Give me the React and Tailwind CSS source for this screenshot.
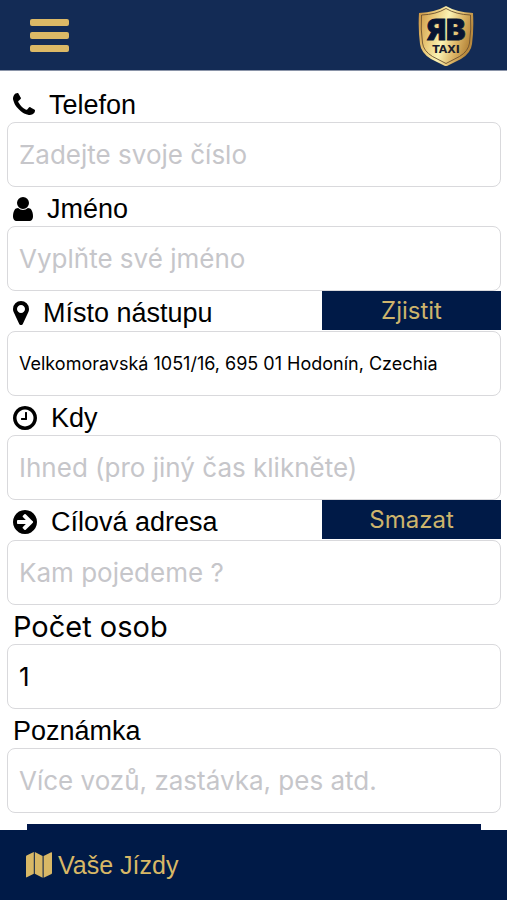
import React, { useState } from 'react';

const icons = {
    phone: {
        box: '192 128 1408 1536',
        size: 'w-[22px] h-6',
        d: 'M1600 1240q0 27-10 70.5t-21 68.5q-21 50-122 106-94 51-186 51-27 0-53-3.5t-57.5-12.5-47-14.5-55.5-20.5-49-18q-98-35-175-83-127-79-264-216t-216-264q-48-77-83-175-3-9-18-49t-20.5-55.5-14.5-47-12.5-57.5-3.5-53q0-92 51-186 56-101 106-122 25-11 68.5-21t70.5-10q14 0 21 3 18 6 53 76 11 19 30 54t35 63.5 31 53.5q3 4 17.5 25t21.5 35.5 7 28.5q0 20-28.5 50t-62 55-62 53-28.5 46q0 9 5 22.5t8.5 20.5 14 24 11.5 19q76 137 174 235t235 174q2 1 19 11.5t24 14 20.5 8.5 22.5 5q18 0 46-28.5t53-62 55-62 50-28.5q14 0 28.5 7t35.5 21.5 25 17.5q25 15 53.5 31t63.5 35 54 30q70 35 76 53 3 7 3 21z',
    },
    user: {
        box: '256 128 1280 1536',
        size: 'w-5 h-6',
        d: 'M1536 1399q0 109-62.5 187t-150.5 78h-854q-88 0-150.5-78t-62.5-187q0-85 8.5-160.5t31.5-152 58.5-131 94-89 134.5-34.5q131 128 313 128t313-128q76 0 134.5 34.5t94 89 58.5 131 31.5 152 8.5 160.5zm-256-887q0 159-112.5 271.5t-271.5 112.5-271.5-112.5-112.5-271.5 112.5-271.5 271.5-112.5 271.5 112.5 112.5 271.5z',
    },
    marker: {
        box: '384 128 1024 1536',
        size: 'w-4 h-6',
        d: 'M1152 640q0-106-75-181t-181-75-181 75-75 181 75 181 181 75 181-75 75-181zm256 0q0 109-33 179l-364 774q-16 33-47.5 52t-67.5 19-67.5-19-46.5-52l-365-774q-33-70-33-179 0-212 150-362t362-150 362 150 150 362z',
    },
    clock: {
        box: '128 128 1536 1536',
        size: 'w-6 h-6',
        d: 'M1024 544v448q0 14-9 23t-23 9h-320q-14 0-23-9t-9-23v-64q0-14 9-23t23-9h224v-352q0-14 9-23t23-9h64q14 0 23 9t9 23zm416 352q0-148-73-273t-198-198-273-73-273 73-198 198-73 273 73 273 198 198 273 73 273-73 198-198 73-273zm224 0q0 209-103 385.5t-279.5 279.5-385.5 103-385.5-103-279.5-279.5-103-385.5 103-385.5 279.5-279.5 385.5-103 385.5 103 279.5 279.5 103 385.5z',
    },
    arrow: {
        box: '128 128 1536 1536',
        size: 'w-6 h-6',
        d: 'M1413 896q0-27-18-45l-91-91-362-362q-18-18-45-18t-45 18l-91 91q-18 18-18 45t18 45l189 189h-502q-26 0-45 19t-19 45v128q0 26 19 45t45 19h502l-189 189q-19 19-19 45t19 45l91 91q18 18 45 18t45-18l362-362 91-91q18-18 18-45zm251 0q0 209-103 385.5t-279.5 279.5-385.5 103-385.5-103-279.5-279.5-103-385.5 103-385.5 279.5-279.5 385.5-103 385.5 103 279.5 279.5 103 385.5z',
    },
};

const Icon = ({ name }) => (
    <svg viewBox={icons[name].box} className={`${icons[name].size} shrink-0`} fill="currentColor" aria-hidden="true">
        <path d={icons[name].d} />
    </svg>
);

const Logo = () => (
    <svg viewBox="0 0 58 62" className="w-[58px] h-[62px]" role="img" aria-label="RB Taxi">
        <defs>
            <linearGradient id="gold" x1="0" y1="0" x2="1" y2="0.3">
                <stop offset="0" stopColor="#c98f3c" />
                <stop offset="0.3" stopColor="#e9c878" />
                <stop offset="0.55" stopColor="#fbf3b4" />
                <stop offset="0.8" stopColor="#dcb566" />
                <stop offset="1" stopColor="#b98a3e" />
            </linearGradient>
        </defs>
        <path d="M29 2 Q39 8 56 9 Q57 25 55 40 Q54 49 44 55 L29 62.500 L14 55 Q4 49 3 40 Q1 25 2 9 Q19 8 29 2z" fill="url(#gold)" />
        <path d="M29 4.500 Q39 10.500 53.500 11 Q54.500 25 52.500 39 Q51.500 47 42.500 52.500 L29 59.500 L15.500 52.500 Q6.500 47 5.500 39 Q3.500 25 4.500 11 Q19 10.500 29 4.500z" fill="none" stroke="#6b5030" strokeWidth="0.9" />
        <text x="29" y="36" textAnchor="middle" fontSize="29" fontWeight="900" fill="#071432" stroke="#071432" strokeWidth="0.8" className="font-[Inter,sans-serif]">ЯB</text>
        <text x="29" y="49" textAnchor="middle" fontSize="11" fontWeight="700" fill="#1a1c2c" className="font-['DejaVu_Sans',sans-serif]">TAXI</text>
    </svg>
);

const MapIcon = () => (
    <svg viewBox="0 0 26 26" className="w-[26px] h-[26px] shrink-0" fill="currentColor" aria-hidden="true">
        <path d="M0 4.5q0-.6.5-.9L7.800 0v21.800L.8 25.300Q0 25.600 0 24.800z" />
        <path d="M8.800 0 16.600 4v21.800L8.800 21.800z" />
        <path d="M25.200.2Q26 0 26 .8v20.300q0 .6-.5.9L17.600 25.800V4z" />
    </svg>
);

const control = "block w-full h-[65px] px-[11px] rounded-lg border border-[#d9d9dc] bg-white font-[Inter,sans-serif] text-black placeholder:text-[#c6c6ca] outline-none focus:border-[#cdb46c]";

const Field = ({ id, label, icon, action, labelClass = "font-['Liberation_Sans',sans-serif] text-[27px]", children }) => (
    <div>
        <div className={`flex items-stretch justify-between ${action ? 'h-10' : 'h-[39px]'}`}>
            <label htmlFor={id} className={`flex items-center gap-[14px] pl-[6px] pt-1 leading-8 ${labelClass}`}>
                {icon && <Icon name={icon} />}
                {label}
            </label>
            {action}
        </div>
        {children}
    </div>
);

const ActionButton = ({ onClick, children }) => (
    <button type="button" onClick={onClick} className="w-[179px] h-[39px] bg-[#001a47] text-[#cdb46c] font-[Inter,sans-serif] text-2xl leading-8">
        {children}
    </button>
);

const App = () => {
    const [form, setForm] = useState({
        phone: '',
        name: '',
        from: 'Velkomoravská 1051/16, 695 01 Hodonín, Czechia',
        when: '',
        to: '',
        persons: '1',
        note: '',
    });

    const bind = (key) => ({
        id: key,
        value: form[key],
        onChange: (e) => setForm({ ...form, [key]: e.target.value }),
    });

    return (
        <div className="h-screen flex flex-col bg-white text-black">

            {/* Top bar */}
            <header className="h-[71px] shrink-0 flex items-center justify-between pl-[30px] pr-8 bg-[#132b55] border-b border-[#8a94a8]">
                <button type="button" aria-label="Menu" className="flex flex-col gap-[6px] py-1">
                    <span className="block w-[39px] h-[7px] rounded-[2px] bg-[#dcb966]" />
                    <span className="block w-[39px] h-[7px] rounded-[2px] bg-[#dcb966]" />
                    <span className="block w-[39px] h-[7px] rounded-[2px] bg-[#dcb966]" />
                </button>
                <Logo />
            </header>

            {/* Order form */}
            <main className="flex-1 min-h-0 overflow-y-auto [scrollbar-width:none]">
                <form className="pl-[7px] pr-[6px] pt-3 pb-3" onSubmit={(e) => e.preventDefault()}>
                    <Field id="phone" label="Telefon" icon="phone">
                        <input {...bind('phone')} type="tel" placeholder="Zadejte svoje číslo" className={`${control} text-[26px]`} />
                    </Field>
                    <Field id="name" label="Jméno" icon="user">
                        <input {...bind('name')} type="text" placeholder="Vyplňte své jméno" className={`${control} text-[26px]`} />
                    </Field>
                    <Field id="from" label="Místo nástupu" icon="marker" action={<ActionButton>Zjistit</ActionButton>}>
                        <input {...bind('from')} type="text" className={`${control} text-lg`} />
                    </Field>
                    <Field id="when" label="Kdy" icon="clock">
                        <input {...bind('when')} type="text" placeholder="Ihned (pro jiný čas klikněte)" className={`${control} text-[26px]`} />
                    </Field>
                    <Field id="to" label="Cílová adresa" icon="arrow" action={<ActionButton onClick={() => setForm({ ...form, to: '' })}>Smazat</ActionButton>}>
                        <input {...bind('to')} type="text" placeholder="Kam pojedeme ?" className={`${control} text-[26px]`} />
                    </Field>
                    <Field id="persons" label="Počet osob" labelClass="font-[Inter,sans-serif] text-[29px]">
                        <select {...bind('persons')} className={`${control} appearance-none text-[26px]`}>
                            {['1', '2', '3', '4', '5', '6', '7', '8'].map(n => (
                                <option key={n} value={n}>{n}</option>
                            ))}
                        </select>
                    </Field>
                    <Field id="note" label="Poznámka">
                        <input {...bind('note')} type="text" placeholder="Více vozů, zastávka, pes atd." className={`${control} text-[26px]`} />
                    </Field>
                    <div className="px-5 pt-[11px]">
                        <button type="submit" aria-label="Objednat" className="block w-full h-16 bg-[#00174a]" />
                    </div>
                </form>
            </main>

            {/* Bottom bar */}
            <footer className="h-[70px] shrink-0 flex items-center pl-[26px] bg-[#001a47]">
                <a href="#jizdy" className="flex items-center gap-[6px] text-[#d8b866] font-['Liberation_Sans',sans-serif] text-[25px] leading-8">
                    <MapIcon />
                    Vaše Jízdy
                </a>
            </footer>
        </div>
    );
};

export default App;
